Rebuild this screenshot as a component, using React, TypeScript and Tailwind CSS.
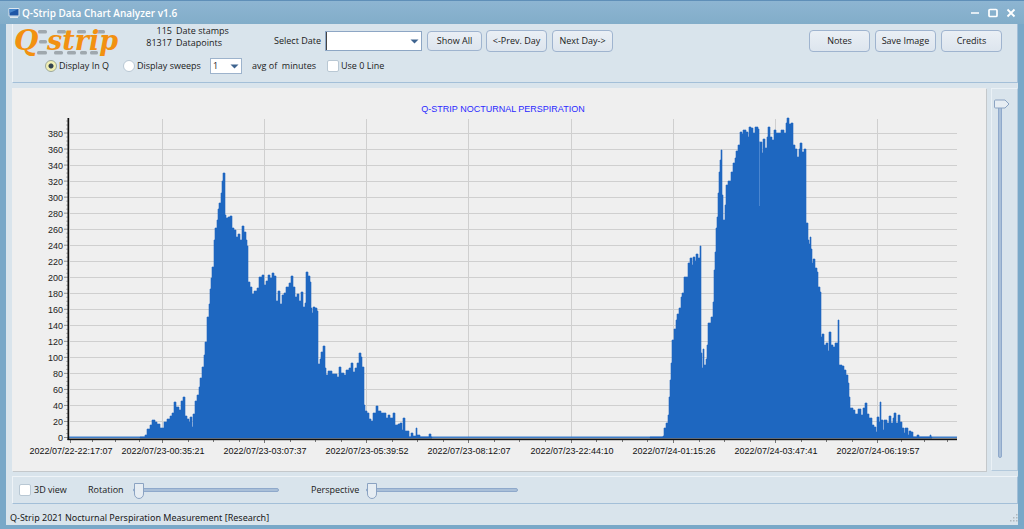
import React, { useState } from "react";

type Point = [number, number];

const FLOOR = 438;

const firstNight: Point[] = [
  [140, 437], [145, 435], [147, 429], [150, 425], [152, 420], [155, 422], [157, 424], [160, 428], [164, 422], [167, 419],
  [170, 416], [172, 413], [174, 402], [176, 407], [179, 410], [181, 401], [183, 397], [185, 416], [187, 419], [189, 422],
  [190, 417], [192, 427], [193, 414], [195, 401], [197, 395], [199, 387], [200, 378], [202, 367], [204, 355], [205, 342],
  [207, 317], [209, 304], [210, 289], [211, 278], [212, 267], [214, 240], [215, 228], [217, 220], [218, 209], [219, 203],
  [221, 193], [222, 181], [223, 173], [225, 215], [226, 218], [228, 217], [230, 216], [232, 228], [234, 230], [236, 237],
  [238, 234], [240, 240], [242, 226], [244, 232], [246, 240], [247, 246], [248, 282], [250, 287], [252, 294], [254, 291],
  [257, 288], [259, 277], [262, 275], [264, 285], [266, 281], [268, 275], [270, 278], [272, 273], [274, 276], [276, 301],
  [278, 291], [280, 304], [282, 295], [284, 293], [286, 287], [289, 283], [291, 276], [293, 287], [295, 297], [297, 294],
  [299, 301], [301, 292], [303, 307], [305, 303], [306, 272], [308, 276], [310, 282], [311, 308], [312, 313], [313, 307],
  [315, 308], [317, 311], [318, 364], [320, 359], [321, 352], [323, 346], [325, 368], [326, 375], [328, 371], [330, 371],
  [332, 374], [335, 374], [337, 377], [339, 367], [341, 373], [344, 375], [346, 370], [349, 368], [351, 363], [353, 372],
  [355, 368], [357, 363], [359, 353], [361, 357], [362, 367], [364, 405], [365, 411], [367, 413], [369, 419], [371, 421],
  [373, 413], [376, 406], [378, 411], [381, 413], [384, 413], [386, 418], [388, 415], [390, 418], [393, 413], [395, 425],
  [398, 424], [400, 423], [402, 430], [403, 418], [405, 431], [407, 431], [409, 437], [411, 433], [413, 436], [416, 428],
  [417, 435], [420, 437], [429, 434], [431, 437],
];

const secondNight: Point[] = [
  [650, 437], [663, 436], [664, 428], [666, 423], [668, 415], [669, 397], [670, 380], [671, 363], [672, 340], [674, 329],
  [676, 320], [677, 314], [679, 308], [681, 297], [682, 293], [684, 277], [686, 277], [688, 263], [690, 258], [692, 265],
  [693, 257], [695, 261], [696, 254], [698, 258], [700, 246], [701, 353], [702, 368], [703, 349], [704, 365], [706, 359],
  [707, 345], [708, 323], [711, 317], [713, 302], [714, 270], [715, 252], [716, 228], [717, 217], [718, 193], [719, 172],
  [720, 160], [721, 150], [722, 195], [723, 220], [725, 205], [726, 185], [728, 181], [730, 181], [731, 172], [733, 163],
  [735, 158], [736, 151], [738, 145], [740, 132], [742, 134], [743, 130], [746, 132], [748, 137], [749, 127], [751, 128],
  [753, 133], [755, 127], [758, 129], [759, 142], [762, 153], [763, 139], [765, 148], [767, 137], [768, 127], [770, 137],
  [772, 140], [774, 130], [776, 133], [779, 133], [781, 130], [784, 133], [786, 123], [787, 118], [789, 124], [791, 123],
  [793, 145], [795, 149], [797, 157], [799, 149], [800, 143], [802, 152], [804, 149], [806, 223], [808, 240], [809, 244],
  [810, 237], [811, 249], [812, 263], [813, 259], [815, 268], [817, 272], [818, 287], [820, 292], [821, 337], [822, 334],
  [824, 345], [826, 343], [828, 351], [829, 332], [831, 345], [833, 347], [835, 343], [838, 320], [839, 365], [842, 366],
  [844, 370], [846, 375], [848, 383], [849, 397], [850, 408], [853, 410], [855, 414], [858, 409], [861, 415], [863, 408],
  [865, 403], [867, 414], [869, 418], [872, 425], [874, 427], [876, 432], [877, 417], [879, 422], [880, 402], [881, 420],
  [883, 430], [884, 420], [887, 423], [889, 416], [891, 423], [893, 418], [894, 413], [896, 423], [898, 415], [900, 422],
  [902, 428], [904, 433], [905, 428], [908, 435], [909, 431], [911, 432], [913, 437], [917, 435], [919, 437], [930, 435],
  [931, 437],
];

const stepPath = (points: Point[]) =>
  `M${points[0][0]} ${FLOOR}` + points.map(([x, y]) => `H${x}V${y}`).join("") + `h1V${FLOOR}Z`;

const yLabels = Array.from({ length: 20 }, (_, i) => i * 20);
const yOf = (value: number) => Math.round(437.3 - value * 0.8013) + 0.5;

const xLabels = [
  { x: 70, text: "2022/07/22-22:17:07" },
  { x: 162, text: "2022/07/23-00:35:21" },
  { x: 264, text: "2022/07/23-03:07:37" },
  { x: 366, text: "2022/07/23-05:39:52" },
  { x: 468, text: "2022/07/23-08:12:07" },
  { x: 571, text: "2022/07/23-22:44:10" },
  { x: 673, text: "2022/07/24-01:15:26" },
  { x: 775, text: "2022/07/24-03:47:41" },
  { x: 877, text: "2022/07/24-06:19:57" },
];
const minorX = [92, 115, 139, 188, 213, 239, 290, 315, 341, 392, 417, 443, 494, 519, 545, 596, 622, 647, 699, 724, 750, 801, 826, 852, 901, 924, 947];

function Chart() {
  return (
    <svg viewBox="12 88 974 383" className="block h-auto w-full" role="img" aria-label="Nocturnal perspiration chart">
      <g stroke="#cfcfcf" strokeWidth="1">
        {yLabels.slice(1).map((v) => (
          <line key={v} x1="70" x2="957" y1={yOf(v)} y2={yOf(v)} />
        ))}
        {xLabels.slice(1).map(({ x }) => (
          <line key={x} x1={x + 0.5} x2={x + 0.5} y1="119" y2="438" />
        ))}
      </g>
      <g stroke="#777" strokeWidth="1">
        {Array.from({ length: 80 }, (_, i) => (
          <line key={i} x1={i % 4 ? 66 : 64} x2="68" y1={437.5 - i * 4.006} y2={437.5 - i * 4.006} strokeOpacity={i % 4 ? 0.5 : 0.8} />
        ))}
        {xLabels.map(({ x }) => (
          <line key={x} x1={x + 0.5} x2={x + 0.5} y1="440" y2="443" />
        ))}
        {minorX.map((x) => (
          <line key={x} x1={x + 0.5} x2={x + 0.5} y1="440" y2="442" />
        ))}
      </g>
      <rect x="69" y="436.5" width="888" height="1.5" fill="#3f7fcb" />
      <g fill="#1e67c0" stroke="#1e67c0" strokeWidth="0.6">
        <path d={stepPath(firstNight)} />
        <path d={stepPath(secondNight)} />
      </g>
      <line x1="759.5" x2="759.5" y1="142" y2="206" stroke="#4a86d0" strokeWidth="1" />
      <rect x="67.5" y="118" width="1.7" height="322" fill="#111" />
      <rect x="67.5" y="438.5" width="889.5" height="1.7" fill="#111" />
      <g fontFamily="'Liberation Sans', Arial, sans-serif" fontSize="9">
        <g fill="#222" textAnchor="end">
          {yLabels.map((v) => (
            <text key={v} x="63" y={yOf(v) + 3.5}>{v}</text>
          ))}
        </g>
        <g fill="#111" textAnchor="middle">
          {xLabels.map(({ x, text }) => (
            <text key={x} x={x + 1} y="454">{text}</text>
          ))}
        </g>
        <text x="503" y="112" fill="#2a2aff" textAnchor="middle">Q-STRIP NOCTURNAL PERSPIRATION</text>
      </g>
    </svg>
  );
}

function Logo() {
  const dashes = [
    [25, 6, 9], [44, 6, 9], [64, 6, 9], [82, 6, 10],
    [26, 16, 8],
    [24, 27, 10], [41, 27, 9], [54, 27, 9], [67, 27, 7], [77, 27, 8],
  ];
  return (
    <svg width="110" height="34" viewBox="0 0 110 34" role="img" aria-label="Q-strip">
      {dashes.map(([x, y, w]) => (
        <rect key={`${x}-${y}`} x={x} y={y} width={w} height="3.5" rx="1.5" fill="#9fa8ae" />
      ))}
      <g fill="#f29111" fontFamily="'DejaVu Serif', serif" fontWeight="700" fontStyle="italic">
        <text x="1" y="26" fontSize="28">Q</text>
        <text x="34" y="26" fontSize="27">strip</text>
      </g>
    </svg>
  );
}

function Button({ children, className = "" }: { children: React.ReactNode; className?: string }) {
  return (
    <button type="button" className={`rounded border border-[#9fb4cf] bg-gradient-to-b from-[#eaeff5] to-[#dde5ee] text-center whitespace-nowrap ${className}`}>
      {children}
    </button>
  );
}

const thumb =
  "appearance-none bg-transparent [&::-webkit-slider-runnable-track]:h-1 [&::-webkit-slider-runnable-track]:rounded-full [&::-webkit-slider-runnable-track]:border [&::-webkit-slider-runnable-track]:border-[#8fa9cb] [&::-webkit-slider-runnable-track]:bg-[#a9bfd8] [&::-webkit-slider-thumb]:-mt-1.5 [&::-webkit-slider-thumb]:h-4 [&::-webkit-slider-thumb]:w-2.5 [&::-webkit-slider-thumb]:appearance-none [&::-webkit-slider-thumb]:rounded-t-sm [&::-webkit-slider-thumb]:rounded-b-full [&::-webkit-slider-thumb]:border [&::-webkit-slider-thumb]:border-[#8ba3c2] [&::-webkit-slider-thumb]:bg-[#e6edf3]";

const box = "size-3 shrink-0 appearance-none border border-[#b9c8d4] bg-white";
const radio = `${box} rounded-full checked:border-[#9aa79a] checked:bg-[radial-gradient(circle,#33424f_0_2px,#f1efb4_3px)]`;

export default function App() {
  const [mode, setMode] = useState("q");
  return (
    <div className="flex flex-col border-x-[6px] border-b-4 border-[#79a8c8] bg-[#d9e4ec] font-['Open_Sans','Noto_Sans',sans-serif] text-[9px] leading-3 text-[#1a1a1a]">
      <header className="-mx-[6px] flex h-6 items-center border-t border-[#5f8fb8] bg-gradient-to-b from-[#8db5d2] to-[#82adc9] px-2 text-white">
        <svg width="12" height="12" viewBox="0 0 12 12" aria-hidden="true">
          <rect x="0.5" y="1" width="11" height="8.5" rx="1" fill="#dce6ee" />
          <rect x="1.5" y="2" width="9" height="6.5" fill="#1e56a6" />
          <path d="M1.5 2H10.5L1.5 6Z" fill="#4585cc" />
          <rect x="2" y="9.5" width="8" height="1.5" fill="#dce6ee" />
        </svg>
        <h1 className="ml-0.5 flex-1 text-[10px] font-semibold">Q-Strip Data Chart Analyzer v1.6</h1>
        <div className="flex items-center gap-2">
          <button type="button" aria-label="Minimize">
            <svg width="10" height="10" viewBox="0 0 10 10"><path d="M1 5H9" stroke="white" strokeWidth="1.5" /></svg>
          </button>
          <button type="button" aria-label="Maximize">
            <svg width="10" height="10" viewBox="0 0 10 10"><rect x="1" y="1.5" width="8" height="7" rx="1" fill="none" stroke="white" strokeWidth="1.7" /></svg>
          </button>
          <button type="button" aria-label="Close">
            <svg width="10" height="10" viewBox="0 0 10 10"><path d="M1.5 1.5L8.5 8.5M8.5 1.5L1.5 8.5" stroke="white" strokeWidth="1.8" /></svg>
          </button>
        </div>
      </header>

      <div className="flex flex-col pl-[6px]">
        <section className="flex h-[59px] flex-col border-r border-b border-[#a3bfd8] border-l border-l-[#eef3f7]">
          <div className="flex h-[34px] items-center">
            <Logo />
            <div className="ml-5 grid w-[88px] grid-cols-[29px_auto] gap-x-1 self-start pt-px whitespace-nowrap">
              <span className="text-right">115</span>
              <span>Date stamps</span>
              <span className="text-right">81317</span>
              <span>Datapoints</span>
            </div>
            <label htmlFor="date" className="ml-8 w-[62px] pr-1 text-right whitespace-nowrap">Select Date</label>
            <div className="flex items-center gap-1">
              <div className="mr-px grid h-5 w-[97px] items-center border border-[#8da6c4] bg-white">
                <select id="date" className="col-start-1 row-start-1 h-full appearance-none border-l border-[#444] bg-transparent px-1" defaultValue="">
                  <option value=""></option>
                </select>
                <svg className="pointer-events-none col-start-1 row-start-1 mr-0.5 justify-self-end" width="9" height="5" viewBox="0 0 9 5"><path d="M0.5 0.5H8.5L4.5 4.5Z" fill="#3f648f" /></svg>
              </div>
              <Button className="h-5 w-[55px]">Show All</Button>
              <Button className="mr-px h-[22px] w-[61px]">&lt;-Prev. Day</Button>
              <Button className="h-[22px] w-[61px]">Next Day-&gt;</Button>
            </div>
            <div className="mr-[15px] ml-auto flex gap-[5px]">
              <Button className="h-[22px] w-[61px]">Notes</Button>
              <Button className="h-[22px] w-[61px]">Save Image</Button>
              <Button className="h-[22px] w-[61px]">Credits</Button>
            </div>
          </div>
          <div className="flex h-4 items-center pl-8 whitespace-nowrap">
            <label className="flex w-[78px] items-center gap-0.5">
              <input type="radio" name="mode" checked={mode === "q"} onChange={() => setMode("q")} className={radio} />
              Display In Q
            </label>
            <label className="flex w-[87px] items-center gap-0.5">
              <input type="radio" name="mode" checked={mode === "sweeps"} onChange={() => setMode("sweeps")} className={radio} />
              Display sweeps
            </label>
            <div className="grid h-4 w-8 items-center border border-[#9db3cc] bg-white">
              <select id="avg" aria-label="Average minutes" className="col-start-1 row-start-1 appearance-none bg-transparent px-0.5" defaultValue="1">
                <option>1</option>
              </select>
              <svg className="pointer-events-none col-start-1 row-start-1 mr-0.5 justify-self-end" width="9" height="5" viewBox="0 0 9 5"><path d="M0.5 0.5H8.5L4.5 4.5Z" fill="#3f648f" /></svg>
            </div>
            <label htmlFor="avg" className="ml-2.5 w-[75px] whitespace-pre">avg of  minutes</label>
            <label className="flex items-center gap-0.5">
              <input type="checkbox" className={`${box} rounded-xs checked:bg-[#3f648f]`} />
              Use 0 Line
            </label>
          </div>
        </section>

        <div className="mt-[5px] flex gap-[5px]">
          <main className="min-w-0 flex-1 bg-[#efefef] shadow-[1px_1px_0_#c4c8cb]">
            <Chart />
          </main>
          <aside className="flex w-[27px] border-t border-r border-b border-l border-[#b3c9dc] border-t-[#eaf1f6] border-l-[#eaf1f6] py-2 pl-0.5">
            <div className="relative w-4">
              <div className="absolute inset-y-1 left-1 w-1 rounded-full border border-[#8fa9cb] bg-[#a9bfd8]" />
              <svg className="absolute top-0.5 left-0" width="16" height="10" viewBox="0 0 16 10"><path d="M1.5 1H11L15 5L11 9H1.5Q0.5 9 0.5 8V2Q0.5 1 1.5 1Z" fill="#e6edf3" stroke="#8ba3c2" /></svg>
              <input type="range" aria-label="Zoom" defaultValue="100" className="absolute inset-0 h-full w-full opacity-0 [writing-mode:vertical-lr]" />
            </div>
          </aside>
        </div>

        <section className="mt-[5px] flex h-7 items-center border border-[#a3bfd8] border-t-[#eef3f7] border-l-[#eef3f7] pl-1.5 whitespace-nowrap">
          <label className="flex w-[69px] items-center gap-[3px]">
            <input type="checkbox" className={`${box} rounded-xs checked:bg-[#3f648f]`} />
            3D view
          </label>
          <label htmlFor="rotation" className="w-[45px]">Rotation</label>
          <input id="rotation" type="range" defaultValue="0" className={`w-[146px] ${thumb}`} />
          <label htmlFor="perspective" className="ml-8 w-[55px]">Perspective</label>
          <input id="perspective" type="range" defaultValue="0" className={`w-[152px] ${thumb}`} />
        </section>
      </div>

      <footer className="flex h-[21px] items-center justify-between pt-1.5 pl-1 font-['Noto_Sans','Open_Sans',sans-serif]">
        <span>Q-Strip 2021 Nocturnal Perspiration Measurement [Research]</span>
        <svg width="8" height="8" viewBox="0 0 8 8" aria-hidden="true">
          <path d="M6 0h1.5v1.5H6zM3 3h1.5v1.5H3zM6 3h1.5v1.5H6zM0 6h1.5v1.5H0zM3 6h1.5v1.5H3zM6 6h1.5v1.5H6z" fill="#b0b8be" />
        </svg>
      </footer>
    </div>
  );
}
